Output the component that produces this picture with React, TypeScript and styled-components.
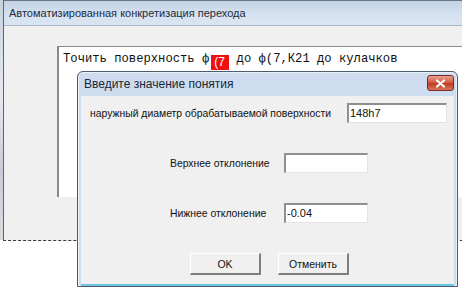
import React from "react"
import styled, { createGlobalStyle } from "styled-components"

const GlobalStyle = createGlobalStyle`
  html, body {
    margin: 0;
    padding: 0;
    background: #ffffff;
  }
`

const Desktop = styled.div`
  position: relative;
  width: 462px;
  height: 287px;
  overflow: hidden;
  background: #ffffff;
  font-family: "Liberation Sans", Arial, sans-serif;
`

/* sliver of another window peeking out on the left */
const BackWindow = styled.div`
  position: absolute;
  left: 0;
  top: 0;
  width: 4px;
  height: 240px;
  background: linear-gradient(#c8d3de, #e6e9ee 40%, #c9ccd6 70%, #d9dbe0);
`

const MainWindow = styled.div`
  position: absolute;
  left: 3px;
  top: 0;
  width: 480px;
  height: 241px;
  display: flex;
  flex-direction: column;
  border-left: 1px solid #5b6470;
  border-top: 1px solid #6b7683;
  border-bottom: 1px dashed #3c3c3c;
  box-sizing: border-box;
  background: #f0f0f0;
`

const TitleBar = styled.div`
  height: 24px;
  display: flex;
  align-items: center;
  padding-left: 5px;
  background: linear-gradient(#c3d3e6, #d6e2f0 60%, #dae5f2);
  border-bottom: 1px solid #a9b7c8;
  font-size: 11px;
  color: #1e2b3c;
  flex-shrink: 0;
`

const WindowBody = styled.div`
  flex: 1;
  padding: 20px 0 0 53px;
`

const TextArea = styled.div`
  height: 151px;
  background: #ffffff;
  border-top: 1px solid #8a8a8a;
  border-left: 2px solid #8a8a8a;
  box-sizing: border-box;
  padding: 5px 0 0 4px;
  font-family: "Liberation Mono", "Courier New", monospace;
  font-size: 12.2px;
  color: #111;
  white-space: pre;
`

/* red highlight over the "(7" of the first size */
const Marker = styled.span`
  position: relative;
  top: 3px;
  display: inline-block;
  width: 18px;
  height: 15px;
  margin-left: 2px;
  vertical-align: top;
  background: #ee1111;
  color: #ffffff;
  font-family: "Liberation Sans", Arial, sans-serif;
  font-size: 12px;
  line-height: 15px;
  padding-left: 3px;
  box-sizing: border-box;
`

const Dialog = styled.div`
  position: absolute;
  left: 77px;
  top: 71px;
  width: 381px;
  height: 216px;
  display: flex;
  flex-direction: column;
  border: 1px solid #4d5a6b;
  border-radius: 6px 6px 0 0;
  background: #cddcee;
  padding: 0 3px;
  box-sizing: border-box;
  box-shadow: 0 0 0 1px rgba(255, 255, 255, 0.6) inset;
`

const DialogTitleBar = styled.div`
  height: 24px;
  display: flex;
  align-items: center;
  justify-content: space-between;
  padding: 0 0 0 3px;
  font-size: 12px;
  color: #1b2737;
  flex-shrink: 0;
`

const CloseButton = styled.div`
  width: 27px;
  height: 16px;
  margin-top: -2px;
  border: 1px solid #7a2a1e;
  border-radius: 3px;
  background: linear-gradient(#e9a192, #d0553f 50%, #c03b22 52%, #d6735a);
  display: flex;
  align-items: center;
  justify-content: center;
  box-sizing: border-box;
`

const DialogBody = styled.div`
  flex: 1;
  background: #f0f0f0;
  border-bottom: 2px solid #6fc8e2;
  padding-top: 7px;
  display: flex;
  flex-direction: column;
  gap: 30px;
  font-size: 10.4px;
  color: #111;
`

const Row = styled.div<{ $indent: number }>`
  height: 20px;
  display: flex;
  align-items: center;
  padding-left: ${p => p.$indent}px;
`

const Label = styled.span<{ $width: number }>`
  width: ${p => p.$width}px;
  flex-shrink: 0;
`

const Field = styled.div<{ $width: number }>`
  width: ${p => p.$width}px;
  height: 20px;
  box-sizing: border-box;
  background: #ffffff;
  border-top: 2px solid #8f8f8f;
  border-left: 2px solid #8f8f8f;
  border-right: 1px solid #e3e3e3;
  border-bottom: 1px solid #e3e3e3;
  padding: 1px 0 0 1px;
  font-size: 11px;
  line-height: 14px;
`

const ButtonRow = styled.div`
  height: 22px;
  display: flex;
  gap: 17px;
  padding-left: 109px;
`

const Button = styled.div`
  width: 71px;
  height: 22px;
  box-sizing: border-box;
  background: #f0f0f0;
  border-top: 1px solid #ffffff;
  border-left: 1px solid #ffffff;
  border-right: 2px solid #7d7d7d;
  border-bottom: 2px solid #7d7d7d;
  display: flex;
  align-items: center;
  justify-content: center;
  font-size: 10.5px;
`

export default function App() {
  return (
    <Desktop>
      <GlobalStyle />
      <BackWindow />
      <MainWindow>
        <TitleBar>Автоматизированная конкретизация перехода</TitleBar>
        <WindowBody>
          <TextArea>
            Точить поверхность ф<Marker>(7</Marker> до ф(7,К21 до кулачков
          </TextArea>
        </WindowBody>
      </MainWindow>

      <Dialog>
        <DialogTitleBar>
          Введите значение понятия
          <CloseButton>
            <svg width="11" height="9" viewBox="0 0 11 9">
              <path d="M2 1.5 L9 7.5 M9 1.5 L2 7.5" stroke="#ffffff" strokeWidth="2.2" strokeLinecap="round" />
            </svg>
          </CloseButton>
        </DialogTitleBar>
        <DialogBody>
          <Row $indent={9}>
            <Label $width={257}>наружный диаметр обрабатываемой поверхности</Label>
            <Field $width={100}>148h7</Field>
          </Row>
          <Row $indent={89}>
            <Label $width={114}>Верхнее отклонение</Label>
            <Field $width={84} />
          </Row>
          <Row $indent={89}>
            <Label $width={114}>Нижнее отклонение</Label>
            <Field $width={84}>-0.04</Field>
          </Row>
          <ButtonRow>
            <Button>OK</Button>
            <Button>Отменить</Button>
          </ButtonRow>
        </DialogBody>
      </Dialog>
    </Desktop>
  )
}
